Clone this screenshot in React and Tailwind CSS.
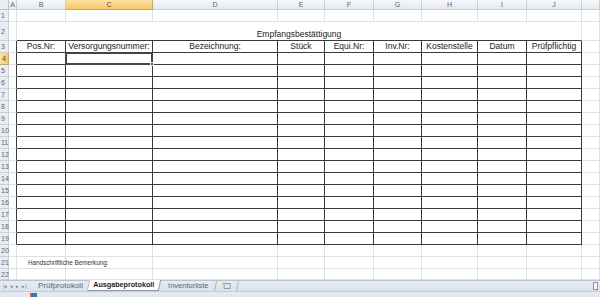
import React from 'react';

const cols = ['A', 'B', 'C', 'D', 'E', 'F', 'G', 'H', 'I', 'J', ''];
const heads = ['Pos.Nr:', 'Versorgungsnummer:', 'Bezeichnung:', 'Stück', 'Equi.Nr:', 'Inv.Nr:', 'Kostenstelle', 'Datum', 'Prüfpflichtig'];
const rows = Array.from({ length: 22 }, (_, i) => i + 1);

const font = { fontFamily: '"Liberation Sans", Arial, sans-serif' };

const Cell = ({ r, c }) => {
  // c: 1 = A ... 11 = K
  const inTable = r >= 3 && r <= 19 && c >= 2 && c <= 10;
  const leftOfTable = r >= 3 && r <= 19 && c === 1;
  const selected = r === 4 && c === 3;
  let cls = 'relative overflow-visible ';
  if (inTable) cls += 'border-r border-b border-r-[#3a3a3a] border-b-[#3a3a3a]';
  else if (leftOfTable) cls += 'border-r border-b border-r-[#3a3a3a] border-b-[#dde1e7]';
  else cls += 'border-r border-b border-[#dde1e7]';
  return (
    <div className={cls}>
      {r === 3 && c >= 2 && c <= 10 && (
        <div className="absolute inset-0 flex items-center justify-center text-[8.5px] leading-none text-[#222] whitespace-nowrap pb-px">
          {heads[c - 2]}
        </div>
      )}
      {r === 21 && c === 2 && (
        <div className="absolute left-[11px] top-[3px] text-[6.3px] leading-none text-[#333] whitespace-nowrap">
          Handschriftliche Bemerkung:
        </div>
      )}
      {selected && (
        <div className="absolute -top-px -left-px -right-px -bottom-px border-2 border-[#444] z-10">
          <div className="absolute -right-[3px] -bottom-[3px] w-[4px] h-[4px] bg-[#444] border border-white" />
        </div>
      )}
    </div>
  );
};

export default function App() {
  return (
    <div className="w-[600px] h-[297px] overflow-hidden bg-white flex flex-col" style={font}>
      <div className="grid grid-cols-[9px_8px_49px_87px_125px_47px_49px_48px_56px_49px_55px_1fr] grid-rows-[10px_12px_19px_repeat(19,12px)] h-[281px]">
        {/* column header row */}
        <div className="bg-[#e9edf2] border-r border-b border-[#b9c3d0]" />
        {cols.map((l, i) => (
          <div
            key={i}
            className={
              l === 'C'
                ? 'flex items-center justify-center text-[7px] leading-none text-[#3b4a5e] border-r border-b border-[#d9a63e] bg-gradient-to-b from-[#fbe2a6] to-[#f6c867]'
                : 'flex items-center justify-center text-[7px] leading-none text-[#55657a] border-r border-b border-[#c8d0da] bg-gradient-to-b from-[#f6f8fa] to-[#e4e9ef]'
            }
          >
            {l}
          </div>
        ))}
        {rows.map((r) => (
          <React.Fragment key={r}>
            <div
              className={
                r === 4
                  ? 'flex items-center pl-[2px] text-[7px] leading-none text-[#3b4a5e] border-r border-b border-[#d9a63e] bg-gradient-to-r from-[#fbe2a6] to-[#f6c867]'
                  : 'flex items-center pl-[1px] text-[7px] leading-none text-[#55657a] border-r border-b border-[#c8d0da] bg-[#e9edf2]'
              }
            >
              {r}
            </div>
            {r === 2 ? (
              <>
                <Cell r={2} c={1} />
                <div className="col-span-9 relative border-r border-b border-r-[#dde1e7] border-b-[#3a3a3a] flex items-end justify-center pb-[2px] text-[8.5px] leading-none text-[#222]">
                  Empfangsbestättigung
                </div>
                <Cell r={2} c={11} />
              </>
            ) : (
              cols.map((l, i) => <Cell key={i} r={r} c={i + 1} />)
            )}
          </React.Fragment>
        ))}
      </div>

      {/* sheet tabs */}
      <div className="h-[11px] flex items-stretch bg-gradient-to-b from-[#e8ecf2] to-[#dce2ea] border-t border-[#b7c2d0] leading-none">
        <div className="w-[32px] flex items-center gap-[3px] pl-[3px] text-[#6d7a8c] text-[5px]">
          <span>|◂</span><span>◂</span><span>▸</span><span>▸|</span>
        </div>
        <div className="flex items-center pl-[6px] pr-[5px] text-[8px] text-[#5a6576] border-r border-[#a9b4c2] -skew-x-12">
          <span className="skew-x-12">Prüfprotokoll</span>
        </div>
        <div className="flex items-center pl-[4px] pr-[5px] bg-white font-bold text-[7.2px] text-[#222] border-r border-b border-[#8f9aa8] -skew-x-12 -mt-px">
          <span className="skew-x-12">Ausgabeprotokoll</span>
        </div>
        <div className="flex items-center pl-[8px] pr-[7px] text-[7.5px] text-[#5a6576] border-r border-[#a9b4c2] -skew-x-12">
          <span className="skew-x-12">Inventurliste</span>
        </div>
        <div className="flex items-center px-[6px] border-r border-[#a9b4c2] -skew-x-12">
          <svg width="9" height="7" viewBox="0 0 9 7" className="skew-x-12">
            <rect x="2" y="1.5" width="6" height="5" fill="#d7e4f5" stroke="#6f8fb8" strokeWidth="0.8" />
            <circle cx="2" cy="1.8" r="1.6" fill="#f3b23a" />
          </svg>
        </div>
        <div className="flex-1" />
        <div className="w-[5px] h-[8px] self-center mr-[2px] border border-[#8b97a6] bg-[#f3f5f8]" />
      </div>
      <div className="flex-1 bg-[#e4e9f0] border-t border-[#c3ccd8] flex items-start">
        <div className="w-[30px]" />
        <div className="w-[7px] h-[4px] mt-px bg-[#3f6fb8] border-l-2 border-[#e0553a]" />
      </div>
    </div>
  );
}
